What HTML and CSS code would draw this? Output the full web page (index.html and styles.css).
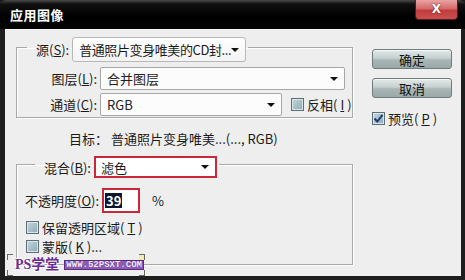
FILE: index.html
```html
<!DOCTYPE html>
<html lang="zh-CN">
<head>
    <meta charset="UTF-8">
    <title>应用图像</title>
    <link rel="stylesheet" href="styles.css">
</head>
<body>
    <div class="window">
        <div class="titlebar">
            <span class="title">应用图像</span>
            <span class="close">X</span>
        </div>
        <div class="dialog">
            <div class="main">
                <fieldset class="group group-source">
                    <legend class="legend">
                        <div class="legend-row">
                            <span class="legend-label">源(<u>S</u>):</span>
                            <div class="combo combo-source">
                                <span class="combo-text">普通照片变身唯美的CD封...</span>
                                <i class="arrow"></i>
                            </div>
                        </div>
                    </legend>
                    <div class="field-row">
                        <span class="field-label">图层(<u>L</u>):</span>
                        <div class="combo combo-field combo-layer">
                            <span class="combo-text">合并图层</span>
                            <i class="arrow"></i>
                        </div>
                    </div>
                    <div class="field-row">
                        <span class="field-label">通道(<u>C</u>):</span>
                        <div class="combo combo-field combo-channel">
                            <span class="combo-text">RGB</span>
                            <i class="arrow"></i>
                        </div>
                        <label class="check check-invert"><span class="box"></span>反相(<u>I</u>)</label>
                    </div>
                </fieldset>

                <p class="target">目标： 普通照片变身唯美...(..., RGB)</p>

                <fieldset class="group group-blend">
                    <legend class="legend legend-blend">
                        <div class="legend-row">
                            <span class="legend-label">混合(<u>B</u>):</span>
                            <div class="combo combo-blend">
                                <span class="combo-text">滤色</span>
                                <i class="arrow"></i>
                            </div>
                        </div>
                    </legend>
                    <div class="opacity-row">
                        <span class="opacity-label">不透明度(<u>O</u>):</span>
                        <div class="opacity-input"><span class="selected">39</span></div>
                        <span class="percent">%</span>
                    </div>
                    <label class="check"><span class="box"></span>保留透明区域(<u>T</u>)</label>
                    <label class="check"><span class="box"></span>蒙版(<u>K</u>)...</label>
                </fieldset>
            </div>

            <div class="side">
                <button class="btn">确定</button>
                <button class="btn">取消</button>
                <label class="check check-preview">
                    <span class="box box-checked">
                        <svg width="11" height="11" viewBox="0 0 11 11"><path d="M1.5 5.5 L4.3 8.5 L9.5 1.8" fill="none" stroke="#1c3c78" stroke-width="2"/></svg>
                    </span>预览(<u>P</u>)
                </label>
            </div>

            <div class="watermark">
                <span class="mark mark-tl"></span>
                <span class="mark mark-tr"></span>
                <span class="mark mark-bl"></span>
                <span class="mark mark-br"></span>
                <span class="wm-name">PS学堂</span>
                <span class="wm-url">WWW.52PSXT.COM</span>
            </div>
        </div>
    </div>
</body>
</html>
```

FILE: styles.css
```css
html, body {
    margin: 0;
    padding: 0;
    background: #1c1c1c;
}
body {
    font-family: "Noto Sans CJK SC", "DejaVu Sans", sans-serif;
    font-size: 13px;
    color: #1a1a1a;
}
u {
    text-decoration: underline;
    text-underline-offset: 1px;
}
.window {
    width: 465px;
    height: 280px;
    display: flex;
    flex-direction: column;
    background: #1e1e1e;
    border-radius: 6px 6px 0 0;
    overflow: hidden;
}
.titlebar {
    height: 29px;
    flex: none;
    display: flex;
    align-items: flex-start;
    padding-left: 10px;
    background: linear-gradient(#4a4a4a 0, #101010 4px, #000 60%, #050505 100%);
}
.title {
    margin-top: 6px;
    line-height: 17px;
    font-size: 13px;
    font-weight: bold;
    color: #fff;
    letter-spacing: 0.5px;
}
.close {
    margin-left: auto;
    margin-right: 7px;
    width: 43px;
    height: 20px;
    line-height: 19px;
    text-align: center;
    font-family: "DejaVu Sans", sans-serif;
    font-size: 12px;
    font-weight: bold;
    color: #fff;
    text-shadow: 0 0 2px #6a1010;
    background: linear-gradient(#e9a3a3 0, #d66a6a 45%, #c23c3c 55%, #c85050 100%);
    border: 1px solid #5a1a1a;
    border-top: none;
    border-radius: 0 0 4px 4px;
    box-sizing: border-box;
}
.dialog {
    flex: 1;
    margin: 0 4px 4px 5px;
    position: relative;
    display: grid;
    grid-template-columns: 337px 80px;
    column-gap: 19px;
    align-items: start;
    padding-left: 11px;
    background: #eeeeee;
    border-top: 1px solid #f8f8f8;
    box-sizing: border-box;
}
.main {
    padding-top: 2px;
}
.group {
    margin: 0;
    border: 1px solid #a9a9a9;
    box-shadow: inset 1px 1px 0 #fff, 1px 1px 0 #fff;
    min-width: 0;
}
.group-source {
    padding: 5px 0 1px 0;
}
.legend {
    margin-left: 10px;
    padding: 5px 2px 0 9px;
}
.legend-blend {
    padding-top: 6px;
}
.legend-row {
    display: flex;
    align-items: center;
    gap: 3px;
}
.combo {
    display: flex;
    align-items: center;
    box-sizing: border-box;
    background: #fcfcfc;
}
.combo-text {
    flex: 1;
    white-space: nowrap;
}
.arrow {
    flex: none;
    width: 0;
    height: 0;
    border-left: 4px solid transparent;
    border-right: 4px solid transparent;
    border-top: 4px solid #111;
    margin-right: 6px;
}
.combo-source {
    width: 174px;
    height: 25px;
    padding-left: 6px;
    border: 1px solid #b8b8b8;
    border-radius: 3px;
    background: linear-gradient(#ffffff, #f3f3f3);
}
.combo-source .combo-text {
    letter-spacing: -0.4px;
}
.combo-field {
    height: 23px;
    padding-left: 6px;
    border: 1px solid #a7a7a7;
    border-radius: 2px;
    color: #222;
}
.combo-layer {
    width: 245px;
}
.combo-channel {
    width: 182px;
}
.field-row {
    display: flex;
    align-items: center;
    height: 23px;
    margin-bottom: 3px;
}
.field-row:last-child {
    margin-bottom: 0;
}
.field-label {
    width: 80px;
    margin-right: 3px;
    text-align: right;
    white-space: nowrap;
}
.check {
    display: flex;
    align-items: center;
    gap: 3px;
    height: 19px;
    white-space: nowrap;
}
.box {
    width: 13px;
    height: 13px;
    box-sizing: border-box;
    display: flex;
    align-items: center;
    justify-content: center;
    border: 1px solid #5c6e76;
    background: linear-gradient(135deg, #c4d6dc, #8eaab4);
    box-shadow: inset 0 0 0 1px #d8e6ea;
}
.check-invert {
    margin-left: 9px;
}
.target {
    margin: 13px 0 3px 53px;
    line-height: 16px;
}
.group-blend {
    padding: 10px 0 8px 8px;
}
.combo-blend {
    width: 123px;
    height: 22px;
    padding-left: 5px;
    border: 2px solid #c8283a;
    background: #fff;
}
.opacity-row {
    display: flex;
    align-items: center;
    height: 25px;
    margin-bottom: 5px;
}
.opacity-label {
    width: 77px;
    white-space: nowrap;
}
.opacity-input {
    width: 38px;
    height: 25px;
    box-sizing: border-box;
    border: 2px solid #c8283a;
    background: #fff;
    padding-left: 1px;
    display: flex;
    align-items: center;
}
.selected {
    background: #0c1630;
    color: #fff;
    font-weight: bold;
    line-height: 15px;
    padding: 0 1px;
}
.percent {
    margin-left: 12px;
}
.group-blend .check {
    margin-left: 1px;
}
.side {
    display: flex;
    flex-direction: column;
    padding-top: 19px;
}
.btn {
    width: 80px;
    height: 20px;
    margin: 0 0 9px 0;
    padding: 0;
    font-family: inherit;
    font-size: 13px;
    color: #111;
    border: 1px solid #6f7c7c;
    border-radius: 3px;
    background: linear-gradient(#e2e8e8 0, #c6d0d0 45%, #a9b6b6 55%, #9aa8a8 100%);
    box-shadow: inset 0 1px 0 #f4f8f8;
}
.check-preview {
    margin-top: 2px;
}
.watermark {
    position: absolute;
    left: 2px;
    top: 224px;
    width: 138px;
    height: 22px;
    display: flex;
    align-items: center;
    padding-left: 8px;
    gap: 5px;
    box-sizing: border-box;
}
.mark {
    position: absolute;
    width: 5px;
    height: 5px;
    border-color: #6a6a5a;
    border-style: solid;
    border-width: 0;
}
.mark-tl {
    left: 0;
    top: 0;
    border-left-width: 1px;
    border-top-width: 1px;
}
.mark-tr {
    right: 0;
    top: 0;
    border-right-width: 1px;
    border-top-width: 1px;
    background: #f2ecb0;
}
.mark-bl {
    left: 0;
    bottom: 0;
    border-left-width: 1px;
    border-bottom-width: 1px;
}
.mark-br {
    right: 0;
    bottom: 0;
    border-right-width: 1px;
    border-bottom-width: 1px;
}
.wm-name {
    font-family: "Liberation Serif", "Noto Sans CJK SC", serif;
    font-size: 14px;
    font-weight: bold;
    line-height: 14px;
    color: #6b2c92;
    text-shadow: 1px 0 0 #fff, -1px 0 0 #fff, 0 1px 0 #fff, 0 -1px 0 #fff;
}
.wm-url {
    font-family: "Liberation Mono", monospace;
    font-size: 9px;
    font-weight: bold;
    line-height: 8px;
    padding: 0 1px;
    color: #f4eefa;
    background: #8e5cb4;
    border: 1px solid #5a2a80;
    text-shadow: 0 0 1px #4a1a70;
}
```
